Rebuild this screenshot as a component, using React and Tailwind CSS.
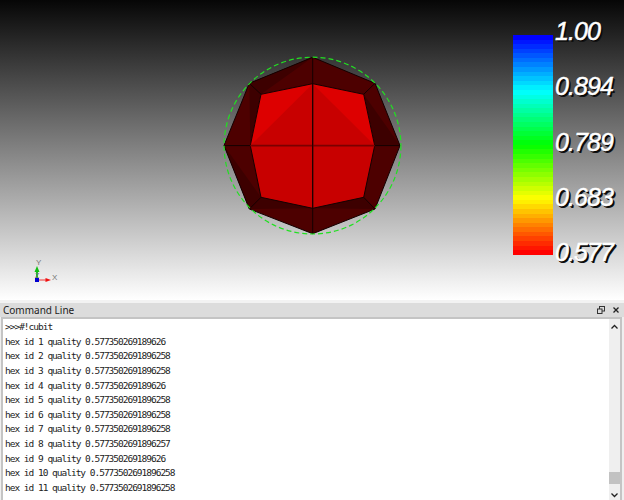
const lines = [
  ">>>#!cubit",
  "hex id 1 quality 0.577350269189626",
  "hex id 2 quality 0.5773502691896258",
  "hex id 3 quality 0.5773502691896258",
  "hex id 4 quality 0.577350269189626",
  "hex id 5 quality 0.5773502691896258",
  "hex id 6 quality 0.5773502691896258",
  "hex id 7 quality 0.5773502691896258",
  "hex id 8 quality 0.5773502691896257",
  "hex id 9 quality 0.577350269189626",
  "hex id 10 quality 0.5773502691896258",
  "hex id 11 quality 0.5773502691896258",
];

const labels = ["1.00", "0.894", "0.789", "0.683", "0.577"];

// rainbow from blue (top) to red (bottom), stepped like the lookup table
function bandColor(i, n) {
  const t = i / (n - 1);
  const s = t * 4;
  let r = 0, g = 0, b = 0;
  if (s < 1) { g = s; b = 1; }
  else if (s < 2) { g = 1; b = 2 - s; }
  else if (s < 3) { r = s - 2; g = 1; }
  else { r = 1; g = 4 - s; }
  return `rgb(${Math.round(r * 255)},${Math.round(g * 255)},${Math.round(b * 255)})`;
}

const bands = Array.from({ length: 48 }, (_, i) => bandColor(i, 48));

function Mesh() {
  return (
    <svg width="190" height="190" viewBox="218 50 190 190">
      <polygon points="312.7,57.3 375,83.3 400,145.6 375,209 312.7,233.7 249.3,209 224,145.6 249.3,83.3" fill="#4d0000" />
      <polygon points="249.3,83.3 312.7,57.3 261,94.3" fill="#3d0000" />
      <polygon points="249.3,83.3 261,94.3 250.3,145.6" fill="#3d0000" />
      <polygon points="363.7,94.3 400,145.6 374.7,145.6" fill="#3d0000" />
      <polygon points="224,145.6 249.3,209 261,197.3" fill="#3d0000" />
      <polygon points="249.3,209 312.7,208.3 261,197.3" fill="#3d0000" />
      <polygon points="375,209 312.7,208.3 363.7,197.3" fill="#3d0000" />
      <polygon points="312.7,83.7 363.7,94.3 374.7,145.6 363.7,197.3 312.7,208.3 261,197.3 250.3,145.6 261,94.3" fill="#c80000" />
      <polygon points="250.3,145.6 261,94.3 312.7,83.7" fill="#dd0000" />
      <polygon points="312.7,83.7 363.7,94.3 374.7,145.6" fill="#dd0000" />
      <g stroke="#140000" strokeWidth="1" fill="none">
        <polygon points="312.7,57.3 375,83.3 400,145.6 375,209 312.7,233.7 249.3,209 224,145.6 249.3,83.3" />
        <polygon points="312.7,83.7 363.7,94.3 374.7,145.6 363.7,197.3 312.7,208.3 261,197.3 250.3,145.6 261,94.3" />
        <path d="M312.7 57.3V233.7M224 145.6H250.3M374.7 145.6H400M249.3 83.3L261 94.3M375 83.3L363.7 94.3M249.3 209L261 197.3M375 209L363.7 197.3" />
      </g>
      <path d="M250.3 145.6H374.7" stroke="#7a0000" strokeWidth="1.6" />
      <path d="M312.7 83.7V208.3" stroke="#1a0000" strokeWidth="1" />
      <circle cx="312.5" cy="145.6" r="88.4" fill="none" stroke="#22e022" strokeWidth="1.2" strokeDasharray="5 3" />
    </svg>
  );
}

function Triad() {
  return (
    <svg width="40" height="34" viewBox="0 0 40 34">
      <path d="M12 25V15" stroke="#20c020" strokeWidth="2" />
      <path d="M12 11L9.5 17H14.5Z" fill="#10c010" />
      <path d="M12 25H22" stroke="#f07070" strokeWidth="1.5" />
      <path d="M26 25L20.5 23V27Z" fill="#f01010" />
      <rect x="10" y="23" width="4" height="4" fill="#0000d0" />
      <text x="11" y="10" fontSize="8" fill="#777" fontFamily="'Liberation Sans', sans-serif">Y</text>
      <text x="27" y="25" fontSize="8" fill="#777" fontFamily="'Liberation Sans', sans-serif">X</text>
      <text x="10" y="23" fontSize="7" fill="#777" fontFamily="'Liberation Sans', sans-serif">Z</text>
    </svg>
  );
}

export default function App() {
  return (
    <div className="w-[624px] h-[500px] flex flex-col bg-[#efefef] overflow-hidden font-['Noto_Sans',sans-serif]">
      {/* 3D VIEW */}
      <div className="relative h-[300px] shrink-0 flex justify-center bg-[linear-gradient(to_bottom,#060606,#ffffff)]">
        <div className="mt-[50px] ml-[2px] h-[190px]">
          <Mesh />
        </div>

        {/* COLOR BAR */}
        <div className="absolute left-[513px] top-[35px] w-[40px] h-[220px] flex flex-col">
          {bands.map((c, i) => (
            <div key={i} className="flex-1" style={{ background: c }} />
          ))}
        </div>
        <div className="absolute left-[555px] top-[17px] h-[250px] flex flex-col justify-between">
          {labels.map((l) => (
            <span
              key={l}
              className="block text-white italic text-[25px] leading-[29px] tracking-[-0.9px] font-['Liberation_Sans',sans-serif] [-webkit-text-stroke:0.5px_#ffffff] [text-shadow:1px_1px_0_#000,2px_2px_0_#111]"
            >
              {l}
            </span>
          ))}
        </div>

        <div className="absolute left-[25px] top-[255px]">
          <Triad />
        </div>
      </div>

      {/* COMMAND LINE */}
      <div className="flex-1 min-h-0 flex flex-col">
        <div className="h-[3px] bg-[#f2f2f2]" />
        <div className="h-[14px] shrink-0 flex items-center justify-between pl-[3px] pr-[5px] bg-[#dcdcdc] text-[10px] text-[#222]">
          <span>Command Line</span>
          <div className="flex items-center gap-[8px]">
            <svg width="8" height="8" viewBox="0 0 8 8" fill="none" stroke="#333" strokeWidth="1">
              <rect x="2.5" y="0.5" width="5" height="4.5" />
              <rect x="0.5" y="3" width="4.5" height="4.5" fill="#dcdcdc" />
            </svg>
            <svg width="6" height="6" viewBox="0 0 6 6" stroke="#222" strokeWidth="1.3">
              <path d="M0.5 0.5L5.5 5.5M5.5 0.5L0.5 5.5" />
            </svg>
          </div>
        </div>
        <div className="flex-1 min-h-0 ml-[1px] mr-[2px] flex border-2 border-b-0 border-[#c4c4c4] bg-white">
          <div className="flex-1 min-w-0 overflow-hidden pl-[2px] pt-[1px] text-[9.5px] leading-[14.64px] text-[#222] font-['DejaVu_Sans_Mono',monospace] tracking-[-1.01px]">
            {lines.map((l, i) => (
              <div key={i} className="whitespace-pre">{l}</div>
            ))}
          </div>
          <div className="w-[11px] shrink-0 flex flex-col justify-between bg-[#efefef]">
            <svg width="11" height="16" viewBox="0 0 11 16" fill="none" stroke="#222" strokeWidth="1.3">
              <path d="M2.5 9.5L5.5 6.5L8.5 9.5" />
            </svg>
            <div className="flex flex-col">
              <div className="h-[12px] bg-[#c2c2c2]" />
              <svg width="11" height="16" viewBox="0 0 11 16" fill="none" stroke="#222" strokeWidth="1.3">
                <path d="M2.5 9.5L5.5 12.5L8.5 9.5" />
              </svg>
            </div>
          </div>
        </div>
      </div>
    </div>
  );
}
